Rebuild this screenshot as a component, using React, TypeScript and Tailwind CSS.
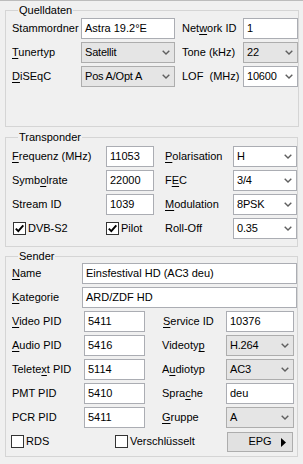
import type { ReactNode } from 'react'

// "&" marks the accelerator letter, as in the Windows dialog
function Label({ text, className = '' }: { text: string; className?: string }) {
  const i = text.indexOf('&')
  let body: ReactNode = text
  if (i >= 0) {
    body = (
      <>
        {text.slice(0, i)}
        <span className="underline underline-offset-[2px]">{text[i + 1]}</span>
        {text.slice(i + 2)}
      </>
    )
  }
  return <div className={`shrink-0 whitespace-nowrap ${className}`}>{body}</div>
}

function Field({ value, className = '' }: { value: string; className?: string }) {
  return (
    <div className={`shrink-0 h-[21px] flex items-center border border-[#abadb3] bg-white pl-[3px] ${className}`}>
      {value}
    </div>
  )
}

function Chevron() {
  return (
    <svg className="shrink-0" width="8" height="5" viewBox="0 0 8 5">
      <path d="M0.7 0.7 L4 4 L7.3 0.7" stroke="#5f5f5f" strokeWidth="1.4" fill="none" />
    </svg>
  )
}

function Combo({ value, gray = false, className = '' }: { value: string; gray?: boolean; className?: string }) {
  return (
    <div
      className={`shrink-0 h-[21px] flex items-center justify-between overflow-hidden border pl-[3px] pr-[4px] ${
        gray ? 'bg-[#e5e5e5] border-[#adadad]' : 'bg-white border-[#abadb3]'
      } ${className}`}
    >
      <span className="tracking-[-0.2px]">{value}</span>
      <Chevron />
    </div>
  )
}

function Check({ label, checked = false, className = '' }: { label: string; checked?: boolean; className?: string }) {
  return (
    <div className={`shrink-0 flex items-center gap-[2px] ${className}`}>
      <div className="w-[13px] h-[13px] border border-[#333333] bg-white flex items-center justify-center">
        {checked && (
          <svg width="11" height="11" viewBox="0 0 11 11">
            <path d="M1.8 5.6 L4.3 8.2 L9.3 2.3" stroke="#000" strokeWidth="1.9" fill="none" />
          </svg>
        )}
      </div>
      <span>{label}</span>
    </div>
  )
}

function Group({ title, className = '', children }: { title: string; className?: string; children: ReactNode }) {
  return (
    <fieldset className={`border border-[#d5d5d5] ${className}`}>
      <legend className="ml-[6px] px-[1px] leading-[13px]">{title}</legend>
      {children}
    </fieldset>
  )
}

export default function App() {
  return (
    <div className="w-[303px] h-[464px] overflow-hidden bg-[#f0f0f0] border-t border-[#bcbcbc] px-[5px] flex flex-col font-['Liberation_Sans',Arial,sans-serif] text-[11px] text-black">
      <Group title="Quelldaten" className="mt-[3px] pt-[1px] pb-[39px] pl-[6px]">
        <div className="flex flex-col gap-[3px]">
          <div className="flex items-center">
            <Label text="Stammordner" className="w-[69px]" />
            <Field value="Astra 19.2°E" className="w-[94px]" />
            <Label text="Net&work ID" className="ml-[7px] w-[61px]" />
            <Field value="1" className="w-[55px]" />
          </div>
          <div className="flex items-center">
            <Label text="&Tunertyp" className="w-[69px]" />
            <Combo value="Satellit" gray className="w-[94px]" />
            <Label text="Tone (kHz)" className="ml-[7px] w-[61px]" />
            <Combo value="22" gray className="w-[55px]" />
          </div>
          <div className="flex items-center">
            <Label text="&DiSEqC" className="w-[69px]" />
            <Combo value="Pos A/Opt A" gray className="w-[94px]" />
            <Label text="LOF  (MHz)" className="ml-[7px] w-[61px] whitespace-pre" />
            <Combo value="10600" className="w-[55px]" />
          </div>
        </div>
      </Group>

      <Group title="Transponder" className="mt-[4px] pt-[2px] pb-[7px] pl-[6px]">
        <div className="flex flex-col gap-[3px]">
          <div className="flex items-center">
            <Label text="&Frequenz (MHz)" className="w-[94px]" />
            <Field value="11053" className="w-[48px]" />
            <Label text="&Polarisation" className="ml-[11px] w-[68px]" />
            <Combo value="H" className="w-[64px]" />
          </div>
          <div className="flex items-center">
            <Label text="Symb&olrate" className="w-[94px]" />
            <Field value="22000" className="w-[48px]" />
            <Label text="F&EC" className="ml-[11px] w-[68px]" />
            <Combo value="3/4" className="w-[64px]" />
          </div>
          <div className="flex items-center">
            <Label text="Stream ID" className="w-[94px]" />
            <Field value="1039" className="w-[48px]" />
            <Label text="&Modulation" className="ml-[11px] w-[68px]" />
            <Combo value="8PSK" className="w-[64px]" />
          </div>
          <div className="flex items-center h-[21px]">
            <Check label="DVB-S2" checked className="ml-[1px] w-[93px]" />
            <Check label="Pilot" checked className="w-[59px]" />
            <Label text="Roll-Off" className="w-[68px]" />
            <Combo value="0.35" className="w-[64px]" />
          </div>
        </div>
      </Group>

      <Group title="Sender" className="mt-[3px] pb-[4px] pl-[6px]">
        <div className="flex flex-col gap-[3px]">
          <div className="flex items-center">
            <Label text="&Name" className="w-[70px]" />
            <Field value="Einsfestival HD (AC3 deu)" className="w-[215px]" />
          </div>
          <div className="flex items-center">
            <Label text="&Kategorie" className="w-[70px]" />
            <Field value="ARD/ZDF HD" className="w-[215px]" />
          </div>
          <div className="flex items-center">
            <Label text="&Video PID" className="w-[72px]" />
            <Field value="5411" className="w-[61px]" />
            <Label text="&Service ID" className="ml-[18px] w-[63px]" />
            <Field value="10376" className="w-[68px]" />
          </div>
          <div className="flex items-center">
            <Label text="&Audio PID" className="w-[72px]" />
            <Field value="5416" className="w-[61px]" />
            <Label text="Videoty&p" className="ml-[17px] w-[64px]" />
            <Combo value="H.264" gray className="w-[68px]" />
          </div>
          <div className="flex items-center">
            <Label text="Telete&xt PID" className="w-[72px]" />
            <Field value="5114" className="w-[61px]" />
            <Label text="A&udiotyp" className="ml-[17px] w-[64px]" />
            <Combo value="AC3" gray className="w-[68px]" />
          </div>
          <div className="flex items-center">
            <Label text="PMT PID" className="w-[72px]" />
            <Field value="5410" className="w-[61px]" />
            <Label text="Spra&che" className="ml-[17px] w-[64px]" />
            <Field value="deu" className="w-[68px]" />
          </div>
          <div className="flex items-center">
            <Label text="PCR PID" className="w-[72px]" />
            <Field value="5411" className="w-[61px]" />
            <Label text="&Gruppe" className="ml-[17px] w-[64px]" />
            <Combo value="A" gray className="w-[68px]" />
          </div>
          <div className="flex items-center h-[21px]">
            <Check label="RDS" className="ml-[-1px] w-[104px]" />
            <Check label="Verschlüsselt" className="w-[112px]" />
            <button className="w-[66px] h-[20px] bg-[#e1e1e1] border border-[#adadad] flex items-center justify-center relative">
              <span>EPG</span>
              <svg className="absolute right-[6px] top-[5px]" width="5" height="9" viewBox="0 0 5 9">
                <path d="M0 0 L5 4.5 L0 9 Z" fill="#000" />
              </svg>
            </button>
          </div>
        </div>
      </Group>
    </div>
  )
}
